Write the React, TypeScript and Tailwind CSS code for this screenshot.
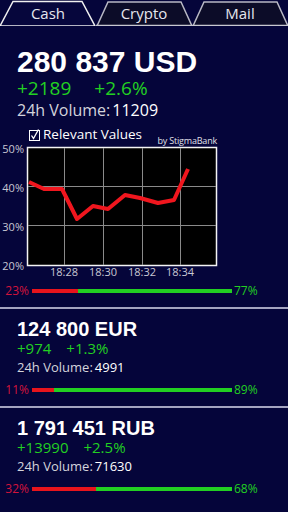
import React from "react";

type Row = {
  title: string;
  change: string;
  pct: string;
  volume: string;
  down: number;
};

const rows: Row[] = [
  { title: "124 800 EUR", change: "+974", pct: "+1.3%", volume: "4991", down: 11 },
  { title: "1 791 451 RUB", change: "+13990", pct: "+2.5%", volume: "71630", down: 32 },
];

const points = [
  [29, 37], [44, 44], [62, 44], [77, 74], [93, 61], [108, 64],
  [125, 50], [140, 53], [158, 58], [174, 55], [188, 24],
];

// tab shape, active one has no bottom border
const Tab = ({ label, active }: { label: string; active?: boolean }) => (
  <div className="relative flex h-[26px] w-[96px] items-start justify-center">
    <svg className="absolute inset-0" width="96" height="26" viewBox="0 0 96 26">
      <polygon
        points={active ? "0,26 13,1.5 82,1.5 95,26" : "1,26 12,2 85,2 96,26"}
        fill={active ? "#06063c" : "#0c0c28"}
        stroke={active ? "#f0f0f0" : "#b8b8c4"}
        strokeWidth="1.5"
      />
      {!active && <line x1="0" y1="25.5" x2="96" y2="25.5" stroke="#c8c8d0" strokeWidth="1.5" />}
    </svg>
    <span className="relative mt-[3px] text-[15px] leading-[20px] text-[#e6e6ee]">{label}</span>
  </div>
);

const Bar = ({ down }: { down: number }) => (
  <div className="flex h-[14px] items-center text-[12px] leading-[14px]">
    <span className="w-[29px] text-right text-[#d3143c]">{down}%</span>
    <div className="ml-[3px] flex h-[4px] w-[200px]">
      <div className="h-full bg-[#e8141c]" style={{ width: `${down * 2}px` }} />
      <div className="h-full flex-1 bg-[#22d022]" />
    </div>
    <span className="ml-[2px] text-[#22d022]">{100 - down}%</span>
  </div>
);

const Chart = () => (
  <svg width="220" height="139" viewBox="0 0 220 139" className="overflow-visible">
    <rect x="27.5" y="2.5" width="189" height="118" fill="#000" stroke="#f4f4f4" strokeWidth="1.5" />
    {[64.5, 103.5, 142.5, 180.5].map((x) => (
      <line key={x} x1={x} y1="3" x2={x} y2="120" stroke="#8a8a8a" strokeWidth="1" />
    ))}
    {[41.5, 80.5].map((y) => (
      <line key={y} x1="28" y1={y} x2="216" y2={y} stroke="#8a8a8a" strokeWidth="1" />
    ))}
    <polyline
      points={points.map((p) => p.join(",")).join(" ")}
      fill="none"
      stroke="#f0161e"
      strokeWidth="4"
      strokeLinejoin="round"
    />
    {[
      ["50%", 3],
      ["40%", 42],
      ["30%", 81],
      ["20%", 120],
    ].map(([t, y]) => (
      <text key={t} x="24" y={y} textAnchor="end" dominantBaseline="central" fontSize="11" fill="#c8c8d4" fontFamily="Open Sans, sans-serif">
        {t}
      </text>
    ))}
    {[
      ["18:28", 64],
      ["18:30", 103],
      ["18:32", 142],
      ["18:34", 180],
    ].map(([t, x]) => (
      <text key={t} x={x} y="131" textAnchor="middle" fontSize="11" fill="#c8c8d4" fontFamily="Open Sans, sans-serif">
        {t}
      </text>
    ))}
  </svg>
);

const App = () => {
  return (
    <div className="h-[512px] w-[288px] overflow-hidden bg-[#05053a] font-['Open_Sans',sans-serif] text-white">
      {/* tabs */}
      <div className="flex">
        <Tab label="Cash" active />
        <Tab label="Crypto" />
        <Tab label="Mail" />
      </div>

      {/* main currency */}
      <div className="pl-[17px]">
        <h1 className="mt-[21px] font-['Liberation_Sans',sans-serif] text-[30px] font-bold leading-[30px]">280 837 USD</h1>
        <div className="mt-[1px] flex gap-[23px] text-[19px] leading-[20px] text-[#22d022]">
          <span>+2189</span>
          <span>+2.6%</span>
        </div>
        <p className="mt-[4px] text-[16px] leading-[16px] text-[#d4d4dc]">
          24h Volume:<span className="ml-[2px] text-white">11209</span>
        </p>
      </div>
      <div className="mt-[10px] flex h-[17px] w-[217px] justify-between pl-[29px]">
        <label className="flex h-[13px] items-center gap-[2px] self-start text-[13.5px] leading-[13px]">
          <svg width="12" height="12" viewBox="0 0 12 12">
            <rect x="0.5" y="1.5" width="10" height="10" fill="none" stroke="#fff" strokeWidth="1" />
            <path d="M2.5 6.5 L4.5 9.5 L9.5 0.5" fill="none" stroke="#fff" strokeWidth="1.3" />
          </svg>
          Relevant Values
        </label>
        <span className="mb-[-1px] self-end text-[9px] leading-[10px] tracking-[-0.2px] text-[#e0e0e8]">by StigmaBank</span>
      </div>
      <Chart />
      <Bar down={23} />
      <div className="mt-[9px] h-[2px] bg-[#a4a4c0]" />

      {rows.map((r, i) => (
        <div key={r.title}>
          <div className="pl-[17px]">
            <h2 className="mt-[10px] font-['Liberation_Sans',sans-serif] text-[20px] font-bold leading-[20px]">{r.title}</h2>
            <div className="mt-[2px] flex gap-[15px] text-[15px] leading-[15px] text-[#22d022]">
              <span>{r.change}</span>
              <span>{r.pct}</span>
            </div>
            <p className="mt-[5px] text-[13px] leading-[13px] text-[#d4d4dc]">
              24h Volume:<span className="ml-[2px] text-white">{r.volume}</span>
            </p>
          </div>
          <div className="mt-[9px]">
            <Bar down={r.down} />
          </div>
          {i === 0 && <div className="mt-[9px] h-[2px] bg-[#a4a4c0]" />}
        </div>
      ))}
    </div>
  );
};

export default App;
